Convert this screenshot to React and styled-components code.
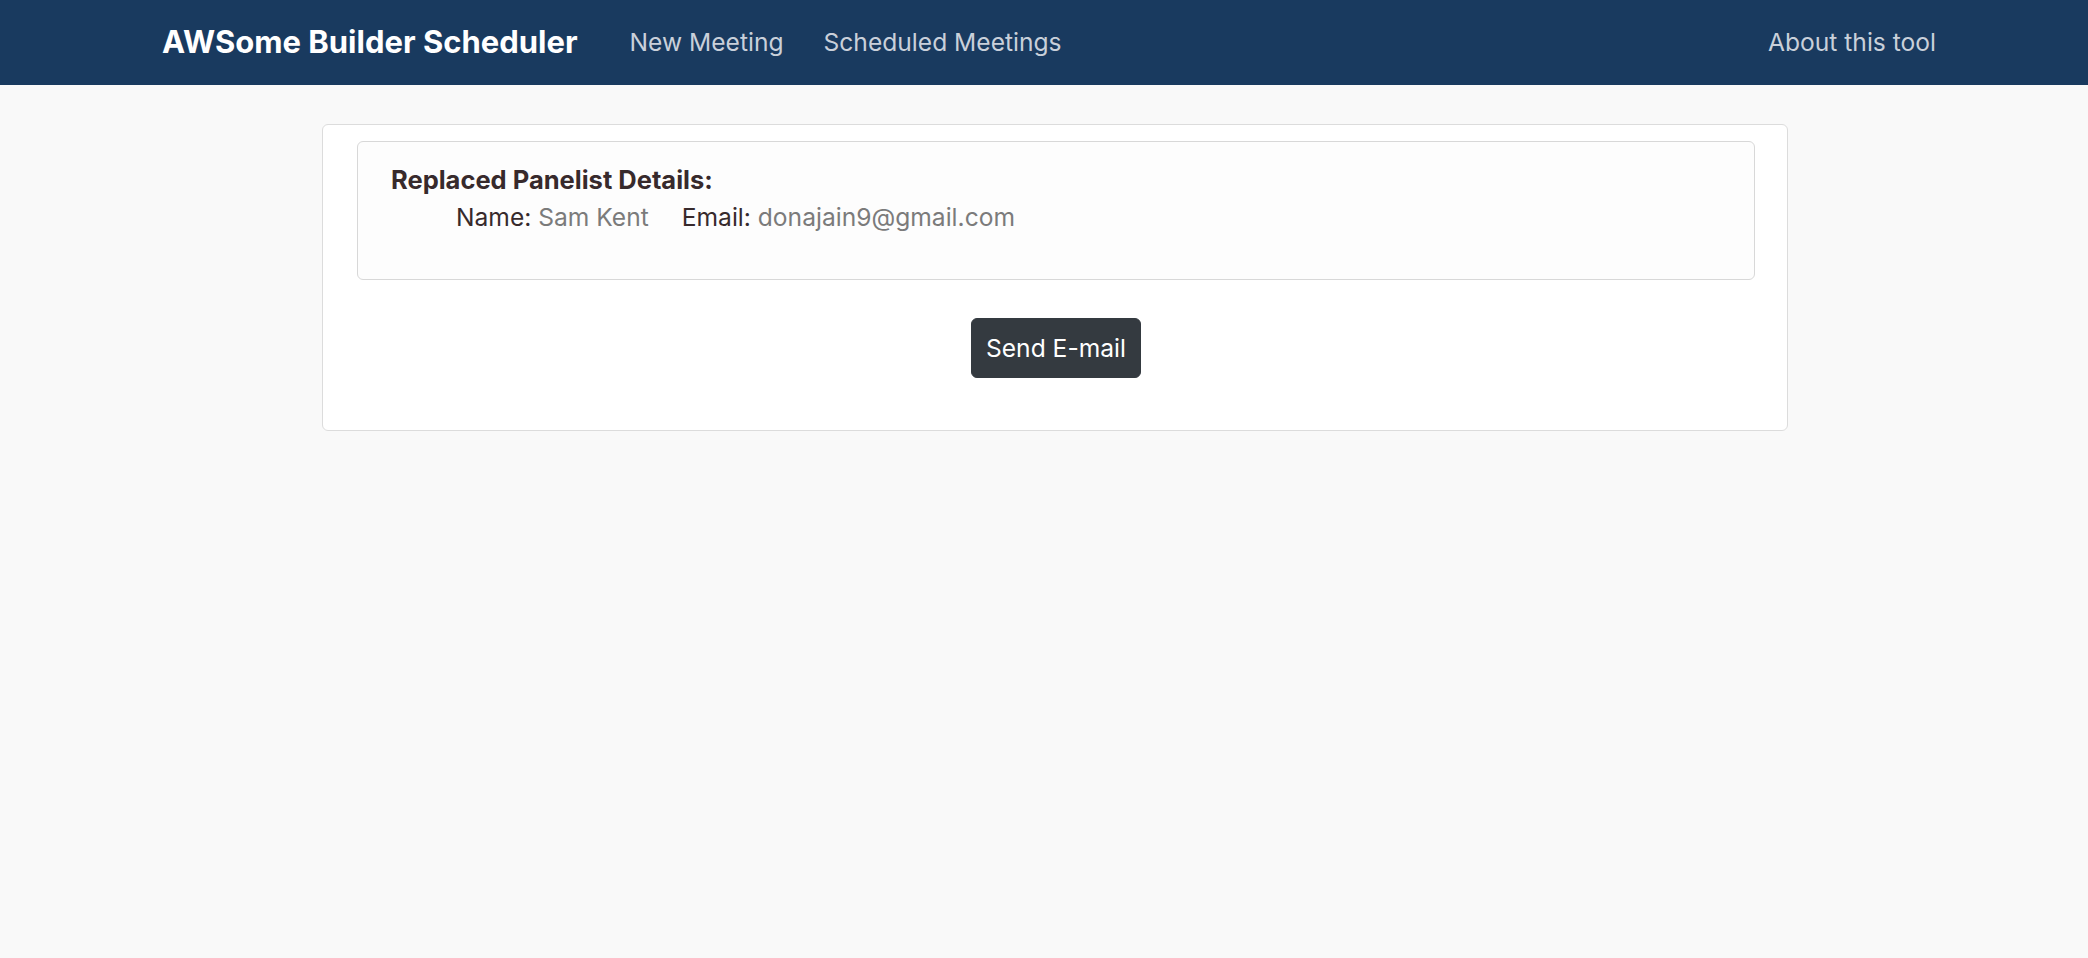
import React from "react";
import styled, { createGlobalStyle } from "styled-components";

const GlobalStyle = createGlobalStyle`
  body {
    margin: 0;
    background-color: #f9f9f9;
    font-family: Inter, "Noto Sans", sans-serif;
    font-size: 24.6px;
    line-height: 1.5;
    color: #212529;
  }
`;

const Navbar = styled.nav`
  height: 85px;
  background-color: #193a5f;
  display: flex;
  align-items: center;
  padding: 0 152px 0 162px;
`;

const Brand = styled.a`
  font-size: 31px;
  font-weight: 700;
  color: #fff;
  text-decoration: none;
  margin-right: 52px;
`;

const NavLinks = styled.div`
  display: flex;
  gap: 40px;
  flex: 1;
`;

const NavLink = styled.a`
  font-size: 24.6px;
  color: #c9d0da;
  text-decoration: none;
  cursor: pointer;
`;

const Page = styled.main`
  padding: 39px 300px 0 322px;
`;

const Card = styled.section`
  background-color: #fff;
  border: 1px solid #dcdcdc;
  border-radius: 6px;
  padding: 16px 32px 52px 34px;
`;

const DetailsBox = styled.div`
  background-color: #fdfdfd;
  border: 1px solid #d8d8d8;
  border-radius: 6px;
  padding: 20px 32px 44px 33px;
`;

const Heading = styled.h5`
  margin: 0;
  font-size: 25.5px;
  font-weight: 700;
  color: #372a2c;
  line-height: 36px;
`;

const DetailRow = styled.div`
  display: flex;
  gap: 33px;
  padding-left: 65px;
  line-height: 36px;
  margin-top: 1px;
`;

const Field = styled.span`
  color: #372a2c;
`;

const Value = styled.span`
  color: #7b7b7b;
`;

const Actions = styled.div`
  display: flex;
  justify-content: center;
  margin-top: 38px;
`;

const Button = styled.button`
  font-family: inherit;
  font-size: 24.6px;
  line-height: 36px;
  color: #fff;
  background-color: #343a40;
  border: 1px solid #343a40;
  border-radius: 6px;
  padding: 11px 14px;
  cursor: pointer;
`;

export default function App() {
  return (
    <>
      <GlobalStyle />
      <Navbar>
        <Brand>AWSome Builder Scheduler</Brand>
        <NavLinks>
          <NavLink>New Meeting</NavLink>
          <NavLink>Scheduled Meetings</NavLink>
        </NavLinks>
        <NavLink>About this tool</NavLink>
      </Navbar>
      <Page>
        <Card>
          <DetailsBox>
            <Heading>Replaced Panelist Details:</Heading>
            <DetailRow>
              <span>
                <Field>Name: </Field>
                <Value>Sam Kent</Value>
              </span>
              <span>
                <Field>Email: </Field>
                <Value>donajain9@gmail.com</Value>
              </span>
            </DetailRow>
          </DetailsBox>
          <Actions>
            <Button>Send E-mail</Button>
          </Actions>
        </Card>
      </Page>
    </>
  );
}
